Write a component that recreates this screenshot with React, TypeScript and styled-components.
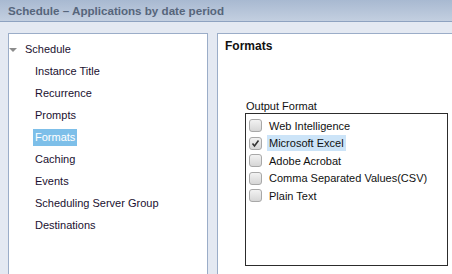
import React from "react";
import styled, { createGlobalStyle } from "styled-components";

const Global = createGlobalStyle`
  html, body { margin: 0; padding: 0; }
  body { font-family: "Liberation Sans", Arial, sans-serif; }
`;

const Page = styled.div`
  width: 452px;
  height: 274px;
  overflow: hidden;
  background: #e4e9f2;
  display: flex;
  flex-direction: column;
`;

const TitleBar = styled.div`
  height: 21px;
  flex: none;
  background: linear-gradient(#a8b9d1, #c3cfe0);
  border-bottom: 1px solid #8ea2c0;
  display: flex;
  align-items: center;
  padding-left: 8px;
  font-size: 11.6px;
  font-weight: bold;
  color: #56657b;
`;

const Body = styled.div`
  flex: 1;
  display: flex;
  gap: 9px;
  padding: 11px 0 0 8px;
  min-height: 0;
`;

const TreePanel = styled.div`
  width: 198px;
  flex: none;
  background: #fff;
  border: 1px solid #9badc8;
  border-bottom: none;
  padding-top: 4px;
  font-size: 11px;
  color: #1a1030;
`;

const TreeRow = styled.div<{ $child?: boolean }>`
  height: 22px;
  display: flex;
  align-items: center;
  padding-left: ${(p) => (p.$child ? "24px" : "0")};
`;

const Caret = styled.span`
  width: 0;
  height: 0;
  border-left: 4px solid transparent;
  border-right: 4px solid transparent;
  border-top: 4px solid #8c8c8c;
  margin: 1px 6px 0 0;
`;

const Label = styled.span<{ $selected?: boolean }>`
  padding: 0 2px;
  height: 17px;
  line-height: 17px;
  background: ${(p) => (p.$selected ? "#7dbfe9" : "transparent")};
  color: ${(p) => (p.$selected ? "#fff" : "inherit")};
`;

const ContentPanel = styled.div`
  flex: 1;
  background: #fff;
  border: 1px solid #9badc8;
  border-right: none;
  border-bottom: none;
  padding: 4px 0 0 7px;
  font-size: 11px;
  color: #111;
`;

const Heading = styled.div`
  font-size: 12px;
  font-weight: bold;
  height: 16px;
  line-height: 16px;
`;

const FieldLabel = styled.div`
  margin: 46px 0 0 21px;
  height: 13px;
  line-height: 13px;
`;

const ListBox = styled.div`
  margin-left: 20px;
  width: 198px;
  height: 148px;
  border: 1px solid #2c2c2c;
  padding: 3px 0 0 3px;
`;

const Option = styled.div`
  height: 17.5px;
  display: flex;
  align-items: center;
`;

const Box = styled.span`
  width: 11px;
  height: 11px;
  border: 1px solid #a8a8a8;
  border-radius: 3px;
  background: linear-gradient(#f2f2f2, #d6d6d6);
  margin-right: 5px;
  display: flex;
  align-items: center;
  justify-content: center;
`;

const OptText = styled.span<{ $selected?: boolean }>`
  padding: 0 2px;
  height: 16px;
  line-height: 16px;
  background: ${(p) => (p.$selected ? "#cce4f8" : "transparent")};
`;

const tree = [
  "Instance Title",
  "Recurrence",
  "Prompts",
  "Formats",
  "Caching",
  "Events",
  "Scheduling Server Group",
  "Destinations",
];

const formats = [
  "Web Intelligence",
  "Microsoft Excel",
  "Adobe Acrobat",
  "Comma Separated Values(CSV)",
  "Plain Text",
];

export default function App() {
  return (
    <Page>
      <Global />
      <TitleBar>Schedule – Applications by date period</TitleBar>
      <Body>
        <TreePanel>
          <TreeRow>
            <Caret />
            <Label>Schedule</Label>
          </TreeRow>
          {tree.map((t) => (
            <TreeRow $child key={t}>
              <Label $selected={t === "Formats"}>{t}</Label>
            </TreeRow>
          ))}
        </TreePanel>
        <ContentPanel>
          <Heading>Formats</Heading>
          <FieldLabel>Output Format</FieldLabel>
          <ListBox>
            {formats.map((f) => {
              const checked = f === "Microsoft Excel";
              return (
                <Option key={f}>
                  <Box>
                    {checked && (
                      <svg width="9" height="9" viewBox="0 0 9 9">
                        <path d="M1.5 4.5 L3.5 7 L7.5 1.5" fill="none" stroke="#333" strokeWidth="1.6" />
                      </svg>
                    )}
                  </Box>
                  <OptText $selected={checked}>{f}</OptText>
                </Option>
              );
            })}
          </ListBox>
        </ContentPanel>
      </Body>
    </Page>
  );
}
